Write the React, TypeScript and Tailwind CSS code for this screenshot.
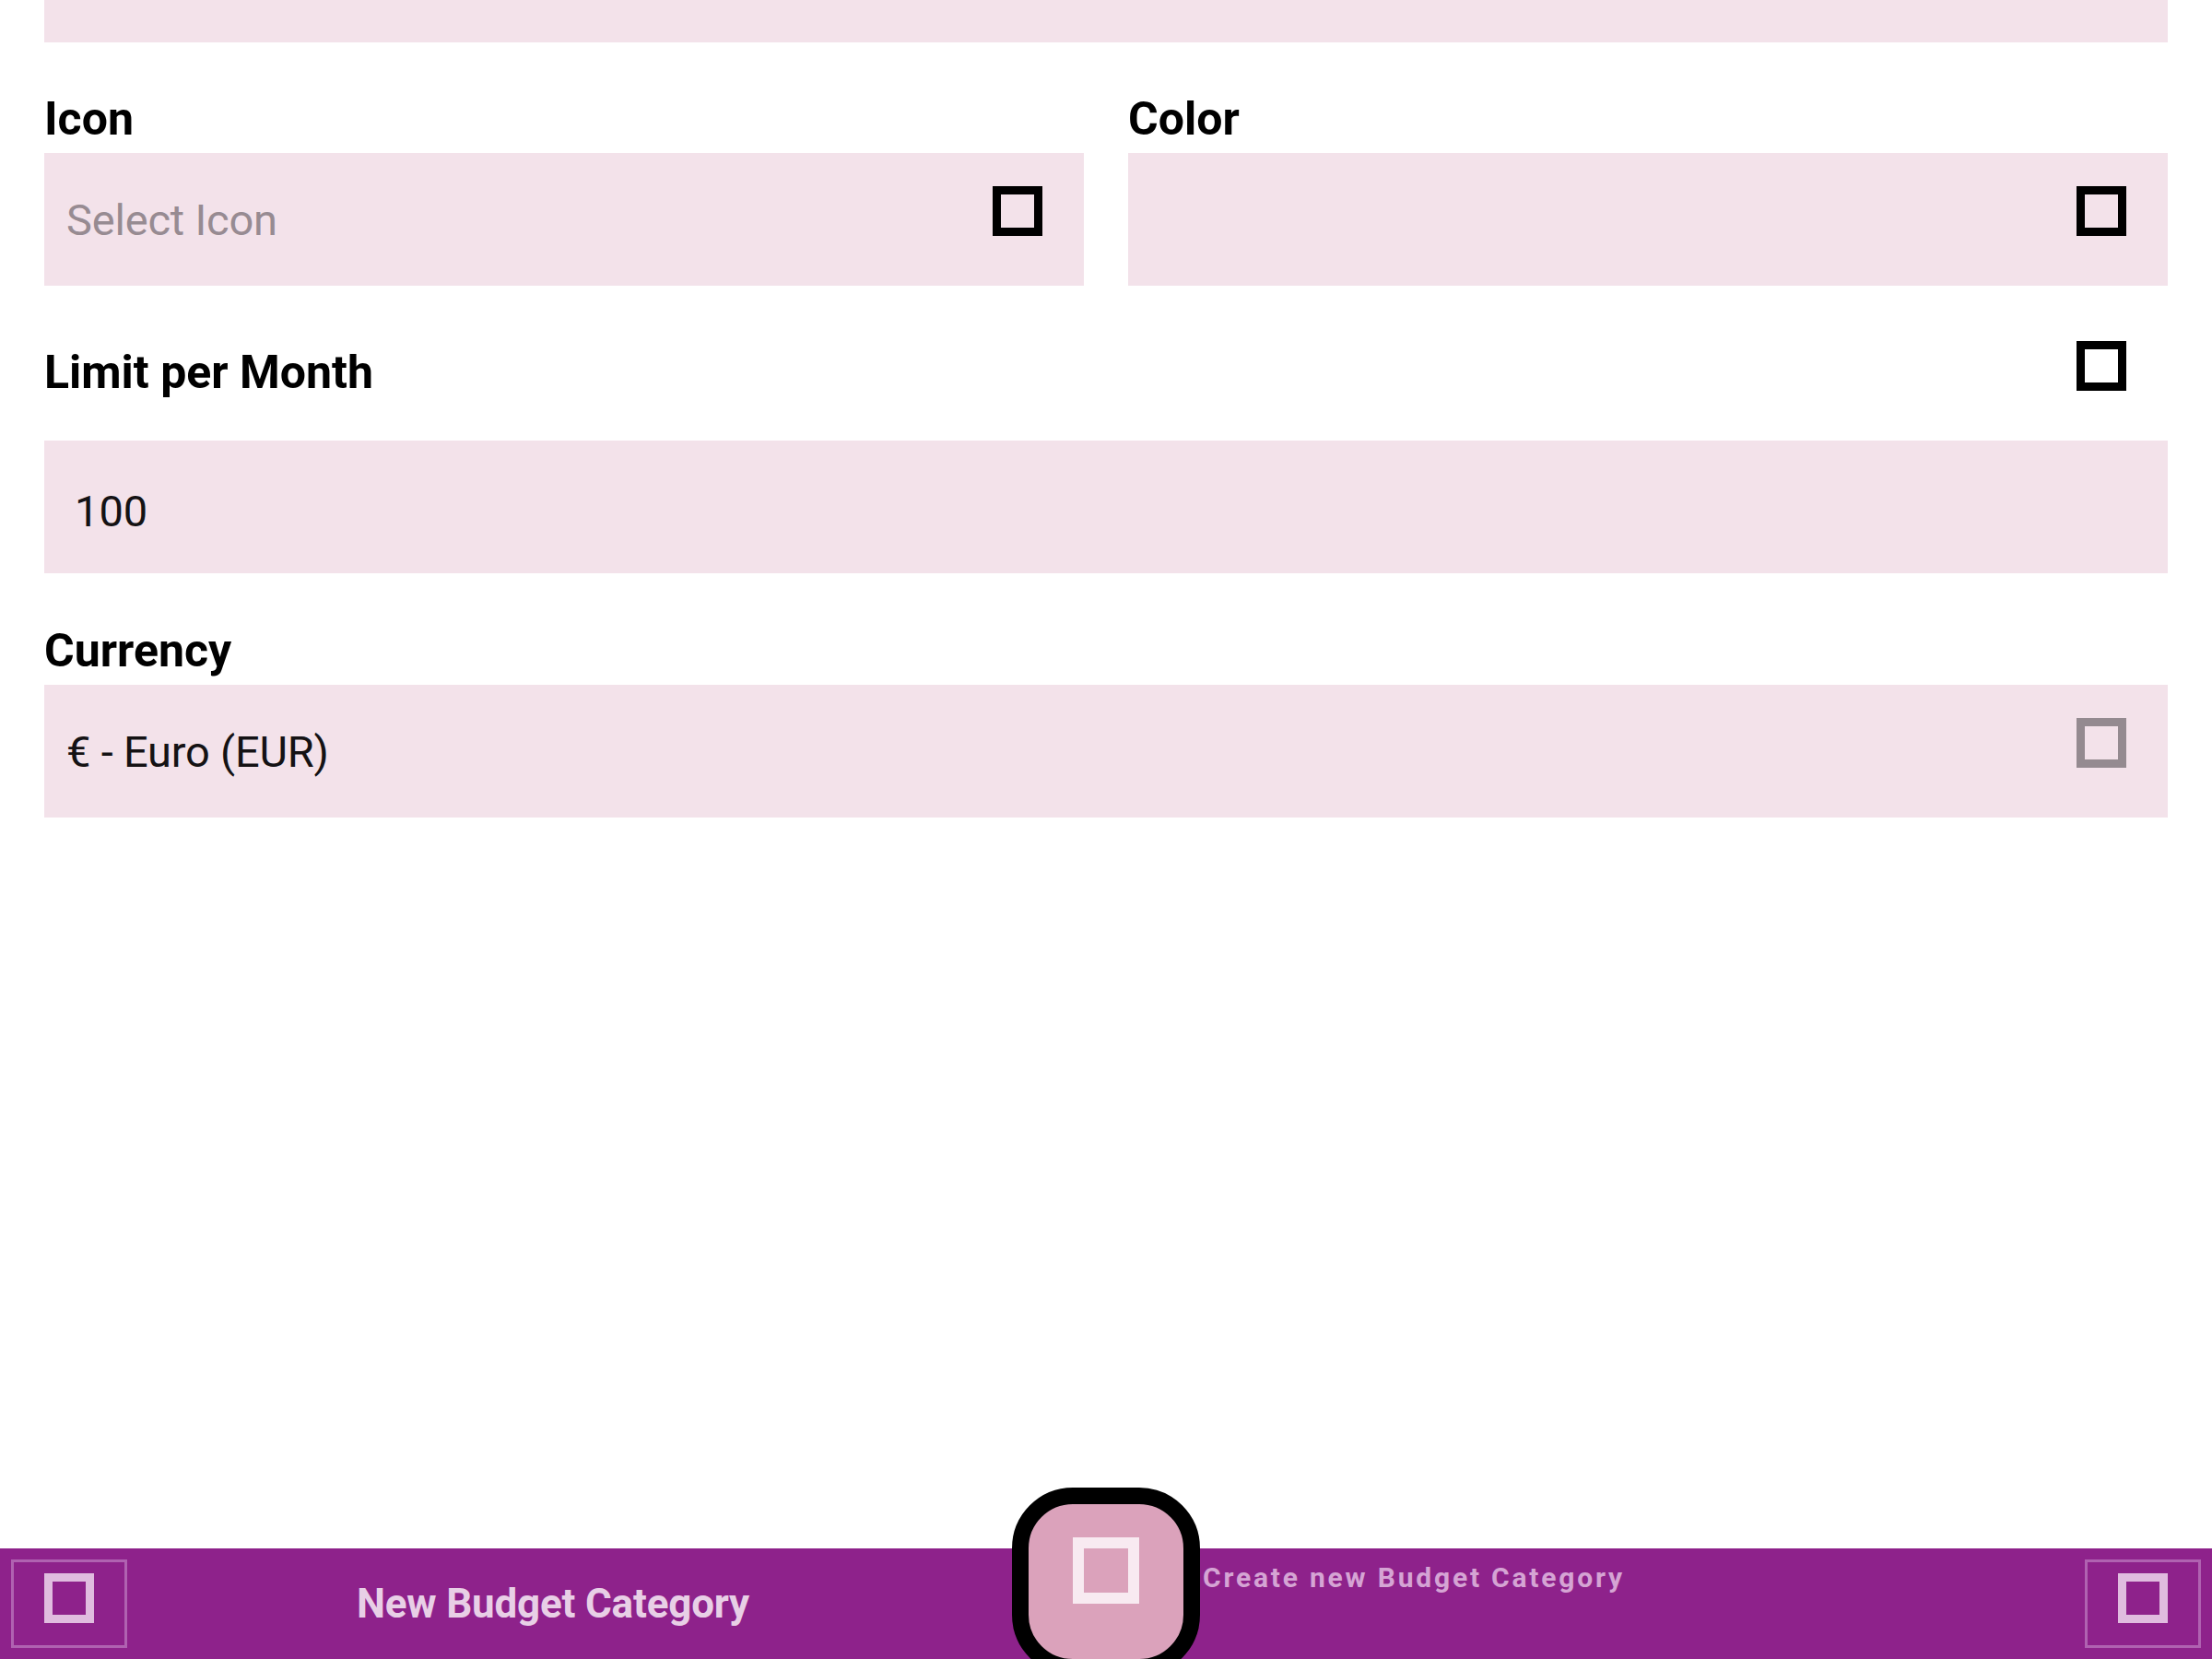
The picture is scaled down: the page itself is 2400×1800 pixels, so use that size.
import type { ReactNode } from 'react';

// Missing-glyph style square, as the icon font failed to load in the source app
function Tofu({ size, stroke, color }: { size: string; stroke: string; color: string }) {
  return <div className={`${size} ${stroke} ${color} shrink-0`} />;
}

function Label({ children }: { children: ReactNode }) {
  return <div className="text-[50px] leading-none font-bold text-black">{children}</div>;
}

function SelectField({ text, placeholder }: { text?: string; placeholder?: boolean }) {
  return (
    <div className="h-[144px] bg-[#f3e2ea] flex items-center pl-6 pr-[45px]">
      <span
        className={`flex-1 text-[47px] leading-none tracking-[-0.2px] ${placeholder ? 'text-[#978b92]' : 'text-[#141214]'}`}
      >
        {text}
      </span>
      <div className="self-start mt-9">
        <Tofu size="w-[54px] h-[54px]" stroke="border-[9px]" color="border-black" />
      </div>
    </div>
  );
}

function BarButton() {
  return (
    <div className="w-[126px] h-[96px] border-[3px] border-[#b062b1] flex justify-center pt-3">
      <Tofu size="w-[54px] h-[54px]" stroke="border-[9px]" color="border-[#e0bcdf]" />
    </div>
  );
}

export default function App() {
  return (
    <div className="w-full h-[1800px] overflow-hidden flex flex-col bg-white font-['Roboto',sans-serif]">
      <div className="flex-1 px-12 flex flex-col">
        {/* field scrolled mostly out of view */}
        <div className="h-[46px] bg-[#f3e2ea]" />

        <div className="mt-[58px] grid grid-cols-2 gap-x-12">
          <div className="flex flex-col gap-3">
            <Label>Icon</Label>
            <SelectField text="Select Icon" placeholder />
          </div>
          <div className="flex flex-col gap-3">
            <Label>Color</Label>
            <SelectField />
          </div>
        </div>

        <div className="mt-[60px] flex justify-between items-start pr-[45px]">
          <div className="mt-[9px]">
            <Label>Limit per Month</Label>
          </div>
          <Tofu size="w-[54px] h-[54px]" stroke="border-[9px]" color="border-black" />
        </div>

        <div className="mt-[49px] h-[144px] bg-[#f3e2ea] flex items-center pl-[33px] pt-[9px]">
          <span className="text-[47px] leading-none text-[#141214]">100</span>
        </div>

        <div className="mt-[59px] flex flex-col gap-3">
          <Label>Currency</Label>
          <div className="h-[144px] bg-[#f3e2ea] flex items-center pl-6 pr-[45px]">
            <span className="flex-1 text-[47px] leading-none tracking-[-0.2px] text-[#141214]">€ - Euro (EUR)</span>
            <div className="self-start mt-9">
              <Tofu size="w-[54px] h-[54px]" stroke="border-[9px]" color="border-[#948a90]" />
            </div>
          </div>
        </div>
      </div>

      <div className="relative h-[120px] bg-[#8e228b] grid grid-cols-2 shrink-0">
        <div className="grid grid-cols-[138px_1fr_138px] items-center">
          <div className="pl-3">
            <BarButton />
          </div>
          <div className="text-center text-[44px] leading-none font-bold tracking-[-0.2px] text-[#e8cfe6]">
            New Budget Category
          </div>
          <div />
        </div>
        <div className="flex items-center justify-end pr-3">
          <BarButton />
        </div>

        {/* floating action button overlapping the bar */}
        <div className="absolute left-1/2 -translate-x-1/2 -top-[66px] w-[204px] h-[204px] rounded-[66px] border-[18px] border-black bg-[#dba2bb] flex justify-center">
          <div className="mt-9">
            <Tofu size="w-[72px] h-[72px]" stroke="border-[12px]" color="border-[#f8eaf1]" />
          </div>
          <div className="absolute left-full ml-[21px] top-[65px] whitespace-nowrap text-[30px] leading-none font-bold tracking-[2.8px] text-[#d5a4d4]">
            Create new Budget Category
          </div>
        </div>
      </div>
    </div>
  );
}
